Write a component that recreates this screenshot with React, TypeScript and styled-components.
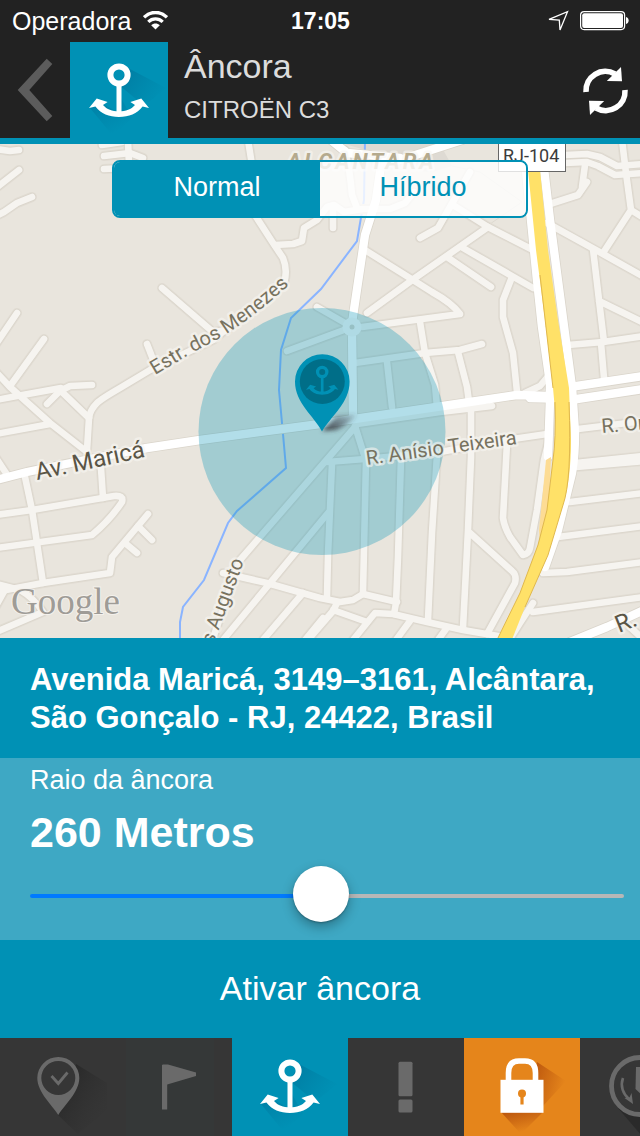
import React, { useState } from "react";
import styled, { createGlobalStyle } from "styled-components";

const teal = "#0091b5";
const dark = "#222222";
const sans = `"Liberation Sans", Arial, sans-serif`;

const GlobalStyle = createGlobalStyle`
  *, *::before, *::after { box-sizing: border-box; }
  body { margin: 0; background: ${teal}; font-family: ${sans}; color: #fff; }
  button { font: inherit; color: inherit; border: 0; padding: 0; background: none; cursor: pointer; }
  h1, h2, p { margin: 0; font-weight: 400; }
  svg { display: block; }
`;

const Screen = styled.div`
  display: flex;
  flex-direction: column;
  min-height: 100vh;
`;

const StatusBar = styled.div`
  display: grid;
  grid-template-columns: 1fr auto 1fr;
  align-items: center;
  height: 42px;
  padding: 0 11px 0 12px;
  background: ${dark};
`;

const Carrier = styled.div`
  display: flex;
  align-items: center;
  gap: 11px;
  font-size: 25px;
  line-height: 40px;
`;

const Clock = styled.time`
  font-size: 23px;
  font-weight: 700;
  line-height: 40px;
`;

const StatusIcons = styled.div`
  display: flex;
  align-items: center;
  justify-content: flex-end;
  gap: 11px;
`;

const Header = styled.header`
  display: flex;
  height: 102px;
  background: ${dark};
  border-bottom: 6px solid ${teal};
`;

const BackButton = styled.button`
  display: flex;
  align-items: center;
  justify-content: center;
  flex: 0 0 70px;
`;

const HeaderTile = styled.div`
  flex: 0 0 98px;
  overflow: hidden;
  background: ${teal};
`;

const Titles = styled.div`
  flex: 1;
  padding: 2px 0 0 16px;
  color: #dcdcdc;
`;

const Title = styled.h1`
  font-size: 34px;
  line-height: 44px;
`;

const Subtitle = styled.p`
  font-size: 24px;
  line-height: 44px;
`;

const RefreshButton = styled.button`
  display: flex;
  align-items: center;
  justify-content: flex-end;
  flex: 0 0 70px;
  padding: 2px 11px 0 0;
`;

const MapArea = styled.main`
  position: relative;
  display: flex;
  flex: 1 0 494px;
  background: #e9e5dd;
  overflow: hidden;
`;

const MapSvg = styled.svg`
  position: absolute;
  inset: 0;
  width: 100%;
  height: 100%;
  font-family: Roboto, sans-serif;
`;

const Segmented = styled.div`
  position: relative;
  display: grid;
  grid-template-columns: 1fr 1fr;
  width: 65%;
  height: 58px;
  margin: 16px auto 0;
  border: 2px solid ${teal};
  border-radius: 8px;
  overflow: hidden;
`;

const Segment = styled.button<{ $active: boolean }>`
  padding-bottom: 4px;
  font-size: 27px;
  line-height: 50px;
  color: ${(p) => (p.$active ? "#fff" : teal)};
  background: ${(p) => (p.$active ? teal : "rgba(255, 255, 255, 0.8)")};
`;

const Address = styled.address`
  padding: 23px 30px 21px;
  font-size: 31px;
  font-style: normal;
  font-weight: 700;
  line-height: 38px;
  background: ${teal};
`;

const RadiusPanel = styled.section`
  padding: 4px 16px 14px 30px;
  background: #3ea8c4;
`;

const RadiusLabel = styled.label`
  display: block;
  font-size: 27px;
  line-height: 36px;
`;

const RadiusValue = styled.output`
  display: block;
  margin: 8px 0;
  font-size: 43px;
  font-weight: 700;
  line-height: 52px;
`;

const Slider = styled.input`
  appearance: none;
  display: block;
  width: 100%;
  height: 60px;
  margin: 0;
  background: none;

  &::-webkit-slider-runnable-track {
    height: 4px;
    border-radius: 2px;
    background: linear-gradient(to right, #007aff var(--fill), #b7b7b7 var(--fill));
  }
  &::-webkit-slider-thumb {
    appearance: none;
    width: 56px;
    height: 56px;
    margin-top: -28px;
    border-radius: 50%;
    background: #fff;
    box-shadow: 0 5px 12px rgba(0, 0, 0, 0.3), 0 1px 2px rgba(0, 0, 0, 0.25);
  }
`;

const ActivateButton = styled.button`
  height: 98px;
  padding-bottom: 2px;
  font-size: 34px;
  background: ${teal};
`;

const TabBar = styled.nav`
  display: flex;
  height: 98px;
  overflow: hidden;
  background: #363636;
`;

const Tab = styled.button<{ $bg?: string }>`
  display: flex;
  justify-content: center;
  flex: 0 0 116px;
  height: 98px;
  overflow: hidden;
  background: ${(p) => p.$bg ?? "#363636"};
`;

/* ---------- icons ---------- */

const AnchorShape = () => (
  <g>
    <circle cx="30" cy="12" r="8.6" fill="none" stroke="currentColor" strokeWidth="6" />
    <path d="M27.5 22h5v28h-5z" fill="currentColor" />
    <path
      d="M0 45 7.7 35.6 18.6 39 14 42C18 46.5 23 48.3 30 48.3S42 46.5 46 42L41.4 39 52.3 35.6 60 45 53.6 43.6C48 51 40 54 30 54S12 51 6.4 43.6Z"
      fill="currentColor"
    />
  </g>
);

const AnchorTile = ({ id }: { id: string }) => (
  <svg width="98" height="98" viewBox="0 0 98 98" color="#fff" aria-hidden="true">
    <defs>
      <linearGradient id={`${id}a`} x1="0" y1="0" x2="1" y2="0.5">
        <stop offset="0.1" stopColor="#006f96" stopOpacity="0.6" />
        <stop offset="1" stopColor="#00789c" stopOpacity="0.05" />
      </linearGradient>
      <linearGradient id={`${id}b`} x1="0.1" y1="0" x2="0.6" y2="0.9">
        <stop offset="0" stopColor="#006f96" stopOpacity="0.5" />
        <stop offset="1" stopColor="#006f96" stopOpacity="0" />
      </linearGradient>
    </defs>
    <path d="M58 26 96 46 79 60 66 57 49 43Z" fill={`url(#${id}a)`} />
    <path d="M20 66 43 94 62 76 51 56 51 72 33 62Z" fill={`url(#${id}b)`} />
    <g transform="translate(19 21)">
      <AnchorShape />
    </g>
  </svg>
);

const TabIcon = ({ children }: { children: React.ReactNode }) => (
  <svg width="116" height="98" viewBox="0 0 116 98" fill="#6a6a6a" aria-hidden="true">
    {children}
  </svg>
);

const PinIcon = () => (
  <TabIcon>
    <defs>
      <linearGradient id="pinShade" x1="0.2" y1="0.1" x2="0.9" y2="0.7">
        <stop offset="0.1" stopColor="#262626" stopOpacity="0.75" />
        <stop offset="1" stopColor="#303030" stopOpacity="0.1" />
      </linearGradient>
    </defs>
    <path d="M76 26 107 45V72L78 96 58 77Z" fill="url(#pinShade)" />
    <circle cx="58.5" cy="40" r="19" fill="#363636" />
    <path
      fillRule="evenodd"
      d="M58.3 77C52 67 37.3 54 37.3 40a21 21 0 0 1 42 0C79.3 54 64.5 67 58.3 77ZM58.3 23a17 17 0 1 0 0 34 17 17 0 1 0 0-34Z"
    />
    <path d="M51.5 38 58.3 45.5 67.5 34.5" fill="none" stroke="#6a6a6a" strokeWidth="2.8" />
  </TabIcon>
);

const FlagIcon = () => (
  <TabIcon>
    <path d="M10 0h88v98H10z" fill="#353838" />
    <path d="M47 26.5h5L80 34.5V38L51.2 46.5V71.5H46V27Z" />
  </TabIcon>
);

const AlertIcon = () => (
  <TabIcon>
    <rect x="50.5" y="23.7" width="14" height="34.5" rx="1.5" />
    <rect x="50.5" y="61.4" width="14" height="13" rx="1.5" />
  </TabIcon>
);

const LockIcon = () => (
  <TabIcon>
    <defs>
      <linearGradient id="lockShade" x1="0" y1="0" x2="1" y2="0.4">
        <stop offset="0" stopColor="#b04a0a" stopOpacity="0.8" />
        <stop offset="1" stopColor="#b04a0a" stopOpacity="0" />
      </linearGradient>
      <linearGradient id="lockShadeLow" x1="0.1" y1="0" x2="0.5" y2="0.9">
        <stop offset="0" stopColor="#b04a0a" stopOpacity="0.8" />
        <stop offset="1" stopColor="#b04a0a" stopOpacity="0" />
      </linearGradient>
    </defs>
    <path d="M73 24 102 43 79 68 70 42Z" fill="url(#lockShade)" />
    <path d="M37 74 57 96 79 74Z" fill="url(#lockShadeLow)" />
    <path
      d="M44.5 43V35Q44.5 23 55 23H61Q71.5 23 71.5 35V43"
      fill="none"
      stroke="#fff"
      strokeWidth="5.6"
    />
    <rect x="36.5" y="41.8" width="43" height="33" fill="#fff" />
    <circle cx="58" cy="55.5" r="4" fill="#e5851b" />
    <path d="M56.4 57h3.2v9.5h-3.2z" fill="#e5851b" />
  </TabIcon>
);

const ClockIcon = () => (
  <TabIcon>
    <path d="M38 70 62 98H90L60 76Z" fill="#2a2a2a" />
    <circle cx="60" cy="48" r="28.5" fill="#363636" stroke="#6a6a6a" strokeWidth="4.8" />
    <path d="M43 40C40 48 43 56 49 61" fill="none" stroke="#6a6a6a" strokeWidth="2.6" />
    <path d="M53 66 44.5 60 49.5 59.5 51.5 55Z" />
    <path d="M56 29H64V59L55.5 51Z" />
  </TabIcon>
);

/* ---------- map ---------- */

const minorRoads = [
  "M-4 149 10 151 19 150",
  "M-4 188 19 170",
  "M-4 216 4 212 17 203 32 197",
  "M102 145 122 142",
  "M104 156 130 153 143 158",
  "M128 140 129 165M104 169 125 168",
  "M248 140 252 165",
  "M253 212 273 243 283 258Q288 270 284 283L240 318 213 340 150 370 120 388Q101 399 97 403 90 410 89 418L87 450",
  "M275 245 293 244 302 241 304 228 317 220 327 207 334 205 344 212 363 209 390 209 405 203 414 192",
  "M333 228V208",
  "M345 150Q350 170 352 195L357 208",
  "M162 288 213 332 228 330",
  "M147 344 154 362",
  "M17 313-4 344",
  "M44 339 10 386",
  "M-4 372 10 387 50 423 87 452",
  "M92 385 70 386 60 391 47 404",
  "M-4 400 17 396 61 388",
  "M62 392 89 418",
  "M-4 434 50 424",
  "M-4 458 6 473",
  "M25 477 32 510 37 543 43 583",
  "M-4 515 32 510 114 496Q124 495 122 502 110 520 92 535L-4 548",
  "M101 468 103 498",
  "M148 514 112 557 110 573 43 583-4 592",
  "M138 526 152 540M125 543 137 553",
  "M-4 584 20 590Q34 598 43 612L-4 632M6 588-4 606",
  "M317 307 352 327 287 351",
  "M355 363 425 353 460 350 482 344",
  "M387 362 392 407",
  "M362 327 460 314Q452 303 432 292L413 280 365 250",
  "M367 313 415 278 488 227",
  "M453 205 488 227 533 250",
  "M470 172 438 228 420 238",
  "M463 248 533 288M447 257 491 287",
  "M512 277 503 300V317L513 353 517 392",
  "M420 322 425 353 435 385 437 407",
  "M458 352 467 387 469 402",
  "M357 424 440 412 492 406",
  "M355 426 365 458",
  "M327 462 365 459 440 452 513 439 547 434",
  "M332 463 328 555 327 597",
  "M366 460 363 593",
  "M328 513 223 640",
  "M401 458 398 557 396 603 394 614",
  "M437 455 432 533 428 620",
  "M471 410V457L468 530 463 628",
  "M470 533 512 571Q517 575 515 583L487 634",
  "M507 443 503 518Q504 526 510 537L523 555Q529 554 530 548L537 510 544 460 549 440",
  "M223 573 267 583 320 598 340 602 353 600 363 594 397 602",
  "M303 593 263 640M323 618 305 640",
  "M337 603 333 611 308 640M333 610 367 622",
  "M353 640 375 613 393 614 427 622 463 630 498 636",
  "M410 621 396 640M446 629 438 640",
  "M565 155 587 154 600 157 617 166 644 164",
  "M565 163 587 162 598 166 615 175 644 173",
  "M585 165 582 187M587 182 578 195 550 204",
  "M622 140 626 173 631 210 644 218M631 210 603 253",
  "M547 223 603 254 644 277",
  "M593 249 599 300 604 342M599 301 644 323",
  "M568 345 603 342 644 336M601 343 604 378",
  "M550 374 540 386 525 393",
  "M578 429 644 421",
  "M576 463 644 456M576 467 644 461",
  "M570 502 644 493M558 537 644 526",
  "M543 573 567 572 644 562M533 612 644 597",
  "M533 603 520 623 508 642M630 627 644 640",
  "M355 427 240 560 211 644",
];

const mainRoads = [
  "M-4 480 27 472 100 457 147 448 200 440 320 424 443 406 517 395 547 396",
  "M550 390 644 376",
  "M530 398 577 399 644 389",
  "M462 140 400 160 381 165 376 200 365 235 352 323",
  "M331 140 347 153 400 158",
  "M352 327 353 417",
  "M525 160 531 220 537 280 542 327 550 383 550 400 548 457",
  "M543 160 550 220 572 387 575 433Q575 455 572 473L558 530 545 567",
  "M570 642 607 627 644 610",
];

const river =
  "M365 140 364 200 357 241 321 289 291 318 281 350 279 390 283 434 286 468 237 511 228 523 204 580 183 607 180 622V642";

const highway =
  "M527 160 536 250 545 320 553 388 555 410Q556 440 553 460L547 510 538 545 520 593 496 642H511L525 607 548 555 563 505Q571 480 571 440L569 388 558 320 548 250 539 160Z";

const AnchorMap = ({ radius }: { radius: number }) => (
  <MapSvg viewBox="0 144 640 494" preserveAspectRatio="xMidYMid slice" role="img" aria-label="Mapa">
    <defs>
      <filter id="soft" x="-50%" y="-50%" width="200%" height="200%">
        <feGaussianBlur stdDeviation="2" />
      </filter>
      <path id="menezes" d="M155 375 192 353 220 338Q258 315 294 280" />
      <linearGradient id="pinShadow" x1="0" y1="1" x2="1" y2="0">
        <stop offset="0.1" stopColor="#3a3a40" stopOpacity="0.9" />
        <stop offset="1" stopColor="#3a3a40" stopOpacity="0.1" />
      </linearGradient>
    </defs>
    <rect y="140" width="640" height="500" fill="#e9e5dd" />
    <path d="M365 144H440L452 166 432 172 372 168ZM345 144H372V152Z" fill="#dedad3" />
    <path d="M452 166 480 172 522 202 490 224" fill="none" stroke="#ddd9d0" />
    <path d={river} fill="none" stroke="#8ab4ff" strokeWidth="2" />
    <g fill="none" strokeLinecap="round" strokeLinejoin="round">
      <g stroke="#e1dcd3" strokeWidth="10">
        {minorRoads.map((d) => <path key={d} d={d} />)}
      </g>
      <g stroke="#dad5cb" strokeWidth="8">
        {minorRoads.map((d) => <path key={d} d={d} />)}
      </g>
      <g stroke="#dad5cb" strokeWidth="10">
        {mainRoads.map((d) => <path key={d} d={d} />)}
      </g>
      <g stroke="#f6f4f0" strokeWidth="6.6">
        {minorRoads.map((d) => <path key={d} d={d} />)}
      </g>
      <g stroke="#fff" strokeWidth="8.4">
        {mainRoads.map((d) => <path key={d} d={d} />)}
      </g>
    </g>
    <circle cx="352" cy="327" r="9.5" fill="#fbfaf8" />
    <circle cx="352" cy="327" r="2.5" fill="#d9d4ca" />
    <path d="M546 460 551 457 549 500 540 545 539 530Z" fill="#fddc94" />
    <path d={highway} fill="#ffe168" />
    <path d="M540 275 553 388M555 402Q556 440 553 460L547 510 538 545 520 593 496 642" fill="none" stroke="#e0b84e" />
    <path d="M569 402Q572 480 563 505L548 555 525 607" fill="none" stroke="#e0b84e" />

    <circle cx="322" cy="431.5" r={radius * 0.475} fill={teal} fillOpacity="0.3" />

    <g
      stroke="#f8f6f2"
      strokeOpacity="0.6"
      strokeWidth="5"
      strokeLinejoin="round"
      paintOrder="stroke"
      fill="#77725f"
      fontSize="20"
    >
      <text x="287" y="169" fontSize="22" fontWeight="700" fontStyle="italic" letterSpacing="3" fill="#b5aa8e">
        ALCANTARA
      </text>
      <text>
        <textPath href="#menezes">Estr. dos Menezes</textPath>
      </text>
      <text transform="translate(37 480) rotate(-12)" fontSize="24" fill="#5a5546">Av. Maricá</text>
      <text transform="translate(367 465) rotate(-8)">R. Anísio Teixeira</text>
      <text transform="translate(602 433) rotate(-5)">R. Or</text>
      <text transform="translate(244 561) rotate(-70)" textAnchor="end">s Augusto</text>
      <text transform="translate(619 633) rotate(-22)" fontSize="24" fill="#5a5546">R.</text>
    </g>
    <rect x="498.5" y="130.5" width="67" height="41" fill="#fff" stroke="#666" />
    <text x="503" y="162" fontSize="18" fill="#3c3c3c">RJ-104</text>
    <text
      x="11"
      y="614"
      fontSize="37"
      fontFamily="Liberation Serif, serif"
      fill="#9f9c97"
      stroke="#f4f1ec"
      strokeWidth="2"
      paintOrder="stroke"
    >
      Google
    </text>

    <path d="M322 431 337 416 357 414Q350 424 336 430Z" fill="url(#pinShadow)" filter="url(#soft)" />
    <path d="M322 431.5C314 416 295 403 295 381.5a27.3 27.3 0 0 1 54.6 0C349.6 403 331 416 322 431.5Z" fill={teal} />
    <circle cx="322.3" cy="381.5" r="22.5" fill="#006e88" />
    <g transform="translate(306 365.5) scale(0.54)" color={teal}>
      <AnchorShape />
    </g>
  </MapSvg>
);

/* ---------- screen ---------- */

export default function App() {
  const [mode, setMode] = useState("Normal");
  const [radius, setRadius] = useState(260);
  const maxRadius = 532;

  return (
    <Screen>
      <GlobalStyle />
      <StatusBar>
        <Carrier>
          Operadora
          <svg width="25" height="20" viewBox="0 0 25 20" fill="none" stroke="#fff" aria-hidden="true">
            <path d="M1 6.3C7.5-.2 17.5-.2 24 6.3" strokeWidth="3.4" />
            <path d="M5.3 10.9C9.3 6.9 15.7 6.9 19.7 10.9" strokeWidth="3.2" />
            <path d="M8.2 14.2C10.6 11.8 14.4 11.8 16.8 14.2L12.5 18.6Z" fill="#fff" stroke="none" />
          </svg>
        </Carrier>
        <Clock>17:05</Clock>
        <StatusIcons>
          <svg width="22" height="22" viewBox="0 0 22 22" fill="none" stroke="#fff" strokeWidth="1.3" aria-hidden="true">
            <path d="M2 9.3 20.5 1.7 13 20 12.3 10Z" />
          </svg>
          <svg width="49" height="20" viewBox="0 0 49 20" fill="#fff" aria-hidden="true">
            <rect x="0.6" y="0.6" width="44" height="18" rx="3.5" fill="none" stroke="#fff" strokeWidth="1.2" />
            <rect x="2.2" y="2.2" width="40.8" height="14.8" rx="2" />
            <path d="M46 6c3.5 .5 3.5 6.5 0 7Z" />
          </svg>
        </StatusIcons>
      </StatusBar>

      <Header>
        <BackButton aria-label="Voltar">
          <svg width="36" height="64" viewBox="0 0 36 64" fill="#5c5c5c" aria-hidden="true">
            <path d="M.7 32 29.7.7 35.3 6 12.3 32 35.3 58 29.7 63.3Z" />
          </svg>
        </BackButton>
        <HeaderTile>
          <AnchorTile id="head" />
        </HeaderTile>
        <Titles>
          <Title>Âncora</Title>
          <Subtitle>CITROËN C3</Subtitle>
        </Titles>
        <RefreshButton aria-label="Atualizar">
          <svg width="47" height="50" viewBox="0 0 47 50" fill="#fff" aria-hidden="true">
            <g id="refreshHalf">
              <path d="M4 26A19.3 19.3 0 0 1 33 8" fill="none" stroke="#fff" strokeWidth="5.6" />
              <path d="M39 1 40 15.3 24.8 15Z" />
            </g>
            <use href="#refreshHalf" transform="rotate(180 23.5 25)" />
          </svg>
        </RefreshButton>
      </Header>

      <MapArea>
        <AnchorMap radius={radius} />
        <Segmented role="group" aria-label="Tipo de mapa">
          {["Normal", "Híbrido"].map((name) => (
            <Segment key={name} $active={mode === name} aria-pressed={mode === name} onClick={() => setMode(name)}>
              {name}
            </Segment>
          ))}
        </Segmented>
      </MapArea>

      <Address>Avenida Maricá, 3149–3161, Alcântara, São Gonçalo - RJ, 24422, Brasil</Address>

      <RadiusPanel>
        <RadiusLabel htmlFor="radius">Raio da âncora</RadiusLabel>
        <RadiusValue htmlFor="radius">{radius} Metros</RadiusValue>
        <Slider
          id="radius"
          type="range"
          min={0}
          max={maxRadius}
          value={radius}
          onChange={(e) => setRadius(Number(e.target.value))}
          style={{ "--fill": `${(radius / maxRadius) * 100}%` } as React.CSSProperties}
        />
      </RadiusPanel>

      <ActivateButton>Ativar âncora</ActivateButton>

      <TabBar>
        <Tab aria-label="Localização"><PinIcon /></Tab>
        <Tab aria-label="Trajetos"><FlagIcon /></Tab>
        <Tab aria-label="Âncora" $bg={teal}><AnchorTile id="tab" /></Tab>
        <Tab aria-label="Alertas"><AlertIcon /></Tab>
        <Tab aria-label="Bloqueio" $bg="#e5851b"><LockIcon /></Tab>
        <Tab aria-label="Histórico"><ClockIcon /></Tab>
      </TabBar>
    </Screen>
  );
}
